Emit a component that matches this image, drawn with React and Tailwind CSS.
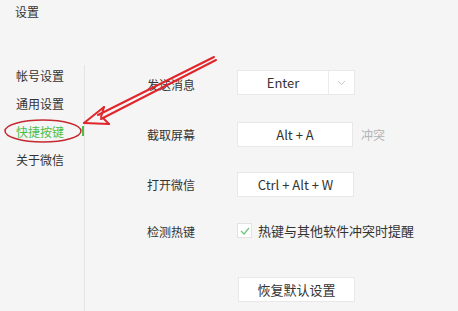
import React from "react";

const menu = ["帐号设置", "通用设置", "快捷按键", "关于微信"];

const Box = ({ children, className = "" }) => (
  <div
    className={
      "h-[25px] bg-white border border-[#e8e8e8] flex items-center justify-center text-[13px] text-[#333] " +
      className
    }
  >
    {children}
  </div>
);

const App = () => {
  return (
    <div
      className="relative w-[458px] h-[311px] bg-[#f5f5f5] overflow-hidden text-[#333]"
      style={{ fontFamily: '"Noto Sans CJK SC", "Noto Sans", sans-serif' }}
    >
      {/* Title */}
      <div className="h-[40px] pl-[15px] pt-[4px] text-[12px] leading-[16px]">设置</div>

      <div className="flex h-[271px]">
        {/* Sidebar */}
        <div className="w-[84px] pt-[22px]">
          {menu.map((m, i) => (
            <div
              key={m}
              className={
                "relative h-[28px] pl-[16px] flex items-center text-[12px] " +
                (i === 2 ? "text-[#4bbd4b]" : "text-[#333]")
              }
            >
              {m}
              {i === 2 && (
                <span className="absolute right-0 top-[8px] w-[2px] h-[10px] bg-[#4bbd4b]"></span>
              )}
            </div>
          ))}
        </div>
        <div className="w-px bg-[#e4e4e4] mt-[25px]"></div>

        {/* Main */}
        <div className="pl-[62px] pt-[30px] text-[12px]">
          <div className="flex items-center h-[25px]">
            <span className="w-[90px] pt-[4px]">发送消息</span>
            <Box className="w-[118px] justify-start">
              <span className="w-[90px] text-center">Enter</span>
              <span className="h-full w-px bg-[#ececec]"></span>
              <span className="flex-1 flex justify-center">
                <svg width="9" height="6" viewBox="0 0 9 6" fill="none" stroke="#c4c4c4" strokeWidth="1">
                  <path d="M1 1l3.5 3.5L8 1" />
                </svg>
              </span>
            </Box>
          </div>

          <div className="flex items-center h-[25px] mt-[27px]">
            <span className="w-[90px]">截取屏幕</span>
            <Box className="w-[116px]">Alt + A</Box>
            <span className="ml-[8px] text-[#b4b4b4]">冲突</span>
          </div>

          <div className="flex items-center h-[25px] mt-[25px]">
            <span className="w-[90px]">打开微信</span>
            <Box className="w-[117px]">Ctrl + Alt + W</Box>
          </div>

          <div className="flex items-center h-[25px] mt-[21px]">
            <span className="w-[90px] pt-[2px]">检测热键</span>
            <span className="w-[15px] h-[15px] bg-white border border-[#e2e2e2] flex items-center justify-center">
              <svg width="10" height="8" viewBox="0 0 10 8" fill="none" stroke="#6cc77a" strokeWidth="1.2">
                <path d="M1 4l3 3 5-6" />
              </svg>
            </span>
            <span className="ml-[6px] text-[13px]">热键与其他软件冲突时提醒</span>
          </div>

          <div className="flex h-[23px] mt-[34px] pl-[91px]">
            <Box className="w-[117px] h-[23px]">恢复默认设置</Box>
          </div>
        </div>
      </div>

      {/* Red annotation */}
      <svg className="absolute left-0 top-0 pointer-events-none" width="458" height="311" viewBox="0 0 458 311">
        <ellipse cx="43" cy="131" rx="38" ry="11" fill="none" stroke="#c42a2f" strokeWidth="1.5" />
        <g stroke="#e0262b" strokeWidth="2" fill="none" strokeLinecap="round">
          <path d="M214 57L98 115" />
          <path d="M216 60L101 119" />
          <path d="M84 123L104 107" />
          <path d="M84 123L109 124" />
          <path d="M104 107L101 117" />
          <path d="M109 124L103 118" />
        </g>
      </svg>
    </div>
  );
};

export default App;
